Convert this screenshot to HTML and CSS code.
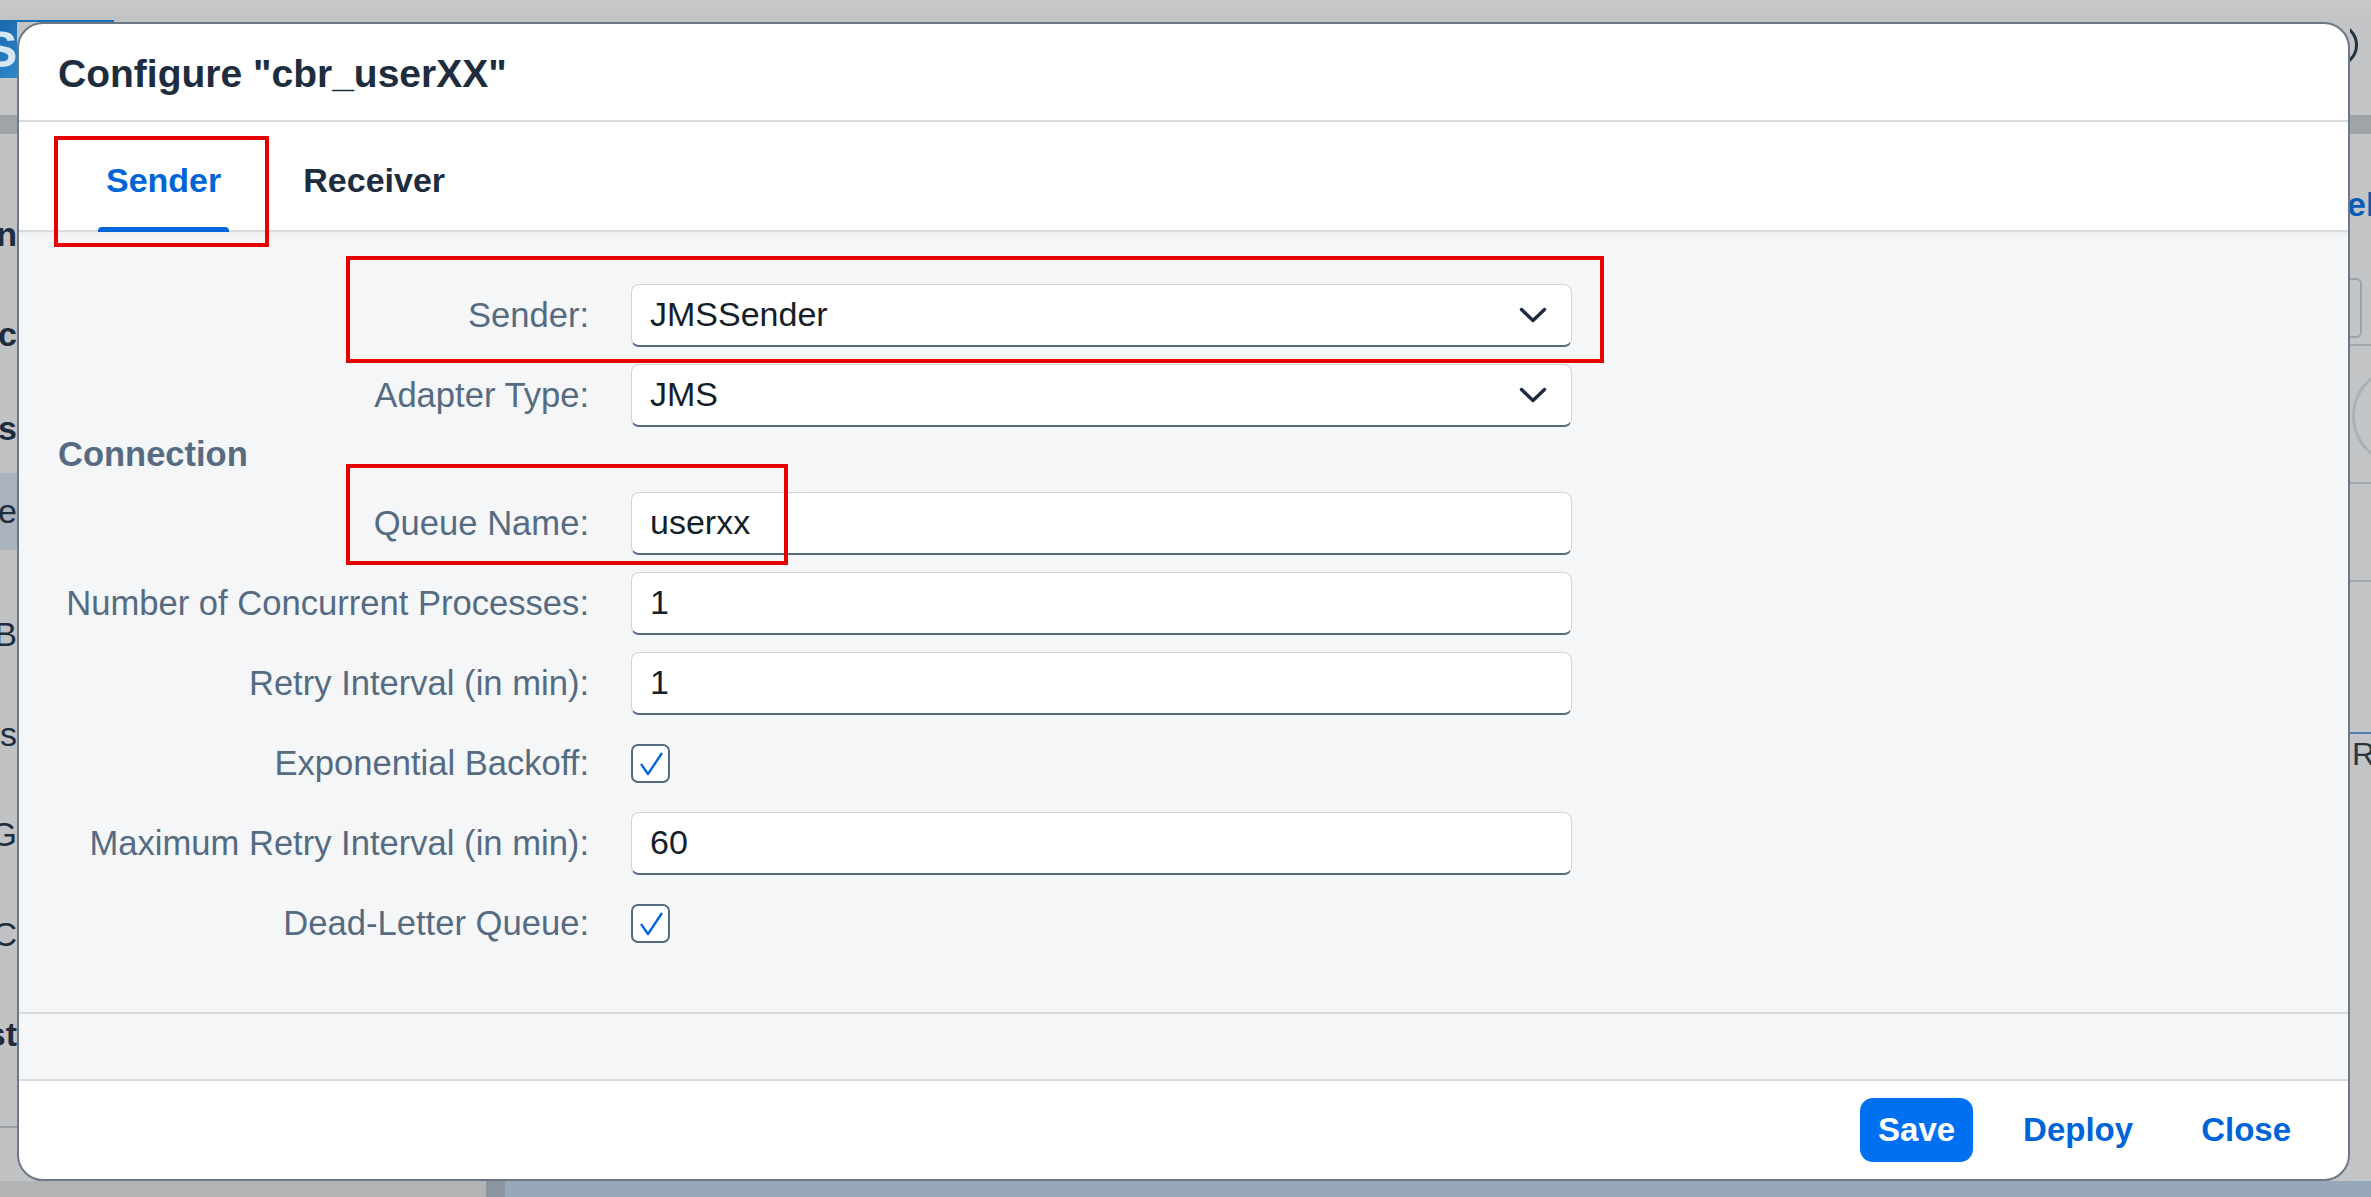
FILE: index.html
```html
<!DOCTYPE html>
<html lang="en">
<head>
<meta charset="utf-8">
<title>Configure cbr_userXX</title>
<link rel="stylesheet" href="styles.css">
</head>
<body>
<div class="page">
  <div class="page-top"><div class="top-logo"></div></div>
  <div class="page-mid">
    <aside class="left-strip">
      <div class="ls-logo"><span>S</span></div>
      <div class="ls-gray"></div>
      <div class="ls-band"></div>
      <div class="ls-space"></div>
      <div class="ls-item h100 bold">n</div>
      <div class="ls-item h100 bold">sc</div>
      <div class="ls-item h89 bold">s</div>
      <div class="ls-item h77 hl">e</div>
      <div class="ls-space34"></div>
      <div class="ls-item h100">B</div>
      <div class="ls-item h100">s</div>
      <div class="ls-item h100">G</div>
      <div class="ls-item h100">AC</div>
      <div class="ls-item h100 bold">st</div>
      <div class="ls-rest"></div>
    </aside>

    <section class="dialog">
      <header class="dlg-header">
        <h1 class="dlg-title">Configure &quot;cbr_userXX&quot;</h1>
      </header>
      <nav class="tabbar">
        <div class="tab active">Sender<span class="mark mark-tab"></span></div>
        <div class="tab">Receiver</div>
      </nav>
      <div class="content">
        <div class="row">
          <span class="mark mark-sender"></span>
          <div class="label">Sender:</div>
          <div class="input select"><span>JMSSender</span>
            <svg class="chev" width="28" height="16" viewBox="0 0 28 16"><polyline points="2.5,2.5 14,13.5 25.5,2.5" fill="none" stroke="#1d2d3e" stroke-width="3.4" stroke-linecap="round" stroke-linejoin="round"/></svg>
          </div>
        </div>
        <div class="row">
          <div class="label">Adapter Type:</div>
          <div class="input select"><span>JMS</span>
            <svg class="chev" width="28" height="16" viewBox="0 0 28 16"><polyline points="2.5,2.5 14,13.5 25.5,2.5" fill="none" stroke="#1d2d3e" stroke-width="3.4" stroke-linecap="round" stroke-linejoin="round"/></svg>
          </div>
        </div>
        <div class="group">Connection</div>
        <div class="row">
          <span class="mark mark-queue"></span>
          <div class="label">Queue Name:</div>
          <div class="input"><span>userxx</span></div>
        </div>
        <div class="row">
          <div class="label">Number of Concurrent Processes:</div>
          <div class="input"><span>1</span></div>
        </div>
        <div class="row">
          <div class="label">Retry Interval (in min):</div>
          <div class="input"><span>1</span></div>
        </div>
        <div class="row">
          <div class="label">Exponential Backoff:</div>
          <div class="checkbox">
            <svg width="35" height="35" viewBox="0 0 35 35"><polyline points="8,18 15,28 29,7" fill="none" stroke="#0064d9" stroke-width="2.3" stroke-linejoin="round"/></svg>
          </div>
        </div>
        <div class="row">
          <div class="label">Maximum Retry Interval (in min):</div>
          <div class="input"><span>60</span></div>
        </div>
        <div class="row">
          <div class="label">Dead-Letter Queue:</div>
          <div class="checkbox">
            <svg width="35" height="35" viewBox="0 0 35 35"><polyline points="8,18 15,28 29,7" fill="none" stroke="#0064d9" stroke-width="2.3" stroke-linejoin="round"/></svg>
          </div>
        </div>
      </div>
      <div class="strip"></div>
      <footer class="footer">
        <button class="btn primary">Save</button>
        <button class="btn">Deploy</button>
        <button class="btn">Close</button>
      </footer>
    </section>

    <aside class="right-strip">
      <div class="rs-top"><div class="avatar"></div></div>
      <div class="rs-band"></div>
      <div class="rs-el">el</div>
      <div class="rs-box"></div>
      <div class="rs-line"></div>
      <div class="rs-circle-wrap"><div class="rs-circle"></div></div>
      <div class="rs-line"></div>
      <div class="rs-space"></div>
      <div class="rs-line"></div>
      <div class="rs-space2"></div>
      <div class="rs-blue"></div>
      <div class="rs-r">R</div>
      <div class="rs-rest"></div>
    </aside>
  </div>
  <div class="page-bottom">
    <div class="pb-a"></div>
    <div class="pb-b"></div>
    <div class="pb-c"></div>
  </div>
</div>
</body>
</html>
```

FILE: styles.css
```css
* { box-sizing: border-box; }
html, body { margin: 0; padding: 0; }
body {
  width: 2371px;
  height: 1197px;
  overflow: hidden;
  background: #c2c3c5;
  font-family: "Liberation Sans", Arial, sans-serif;
}
.page { display: flex; flex-direction: column; width: 2371px; height: 1197px; }

/* backdrop */
.page-top { flex: none; height: 22px; background: linear-gradient(#c7c8ca, #c1c2c4); display: flex; align-items: flex-end; }
.top-logo { width: 114px; height: 2px; background: #1f6fb5; }
.page-mid { flex: none; height: 1159px; display: flex; }
.page-bottom { flex: 1; display: flex; }
.pb-a { width: 486px; background: #b2b3b5; }
.pb-b { width: 19px; background: #8b96a1; }
.pb-c { flex: 1; background: #97a9b8; }

.left-strip { flex: none; width: 17px; overflow: hidden; display: flex; flex-direction: column; background: #c1c2c4; }
.ls-logo { flex: none; height: 56px; background: linear-gradient(135deg, #1b69ad, #2b87c9); overflow: hidden; }
.ls-logo span { display: block; margin-left: -16px; font-size: 50px; font-weight: 700; line-height: 56px; color: #d7e6f3; }
.ls-gray { flex: none; height: 37px; background: #c5c6c8; }
.ls-band { flex: none; height: 19px; background: #a0a4a8; }
.ls-space { flex: none; height: 50px; }
.ls-space34 { flex: none; height: 34px; }
.ls-item { flex: none; display: flex; align-items: center; justify-content: flex-end; font-size: 34px; color: #1d2d3e; white-space: nowrap; }
.ls-item.bold { font-weight: 700; }
.ls-item.hl { background: #aab3bd; }
.h100 { height: 100px; }
.h89 { height: 89px; }
.h77 { height: 77px; }
.ls-rest { flex: 1; border-top: 42px solid #c1c2c4; box-shadow: inset 0 2px 0 #9a9ea2; }

.right-strip { flex: 1; overflow: hidden; display: flex; flex-direction: column; background: #c3c4c6; }
.rs-top { flex: none; height: 93px; padding-top: 1px; }
.avatar { width: 44px; height: 44px; margin-left: -36px; border-radius: 50%; border: 3px solid #22313f; }
.rs-band { flex: none; height: 19px; background: #a0a4a8; }
.rs-el { flex: none; height: 140px; padding-top: 50px; font-size: 34px; font-weight: 700; color: #0a5bb5; line-height: 40px; margin-left: -3px; }
.rs-box { flex: none; height: 60px; width: 12px; border: 2px solid #9aa2aa; border-left: none; border-radius: 0 6px 6px 0; margin-top: 4px; }
.rs-line { flex: none; height: 2px; background: #a3a8ad; margin-top: 6px; }
.rs-circle-wrap { flex: none; height: 130px; padding-top: 20px; }
.rs-circle { width: 100px; height: 100px; margin-left: 2px; border-radius: 50%; border: 3px solid #a9b0b7; }
.rs-space { flex: none; height: 90px; }
.rs-space2 { flex: none; height: 150px; }
.rs-blue { flex: none; height: 2px; background: #4d7fb0; }
.rs-r { flex: none; font-size: 32px; color: #2a3540; line-height: 40px; margin-left: 2px; }
.rs-rest { flex: 1; }

/* dialog */
.dialog {
  flex: none;
  width: 2333px;
  height: 1159px;
  border: 2px solid #6c7886;
  border-radius: 26px;
  background: #fff;
  overflow: hidden;
  display: flex;
  flex-direction: column;
}
.dlg-header { flex: none; height: 98px; padding: 28px 0 0 39px; border-bottom: 2px solid #d9dadc; }
.dlg-title { margin: 0; font-size: 39px; font-weight: 700; color: #1d2d3e; line-height: normal; }

.tabbar {
  flex: none;
  height: 110px;
  display: flex;
  gap: 66px;
  padding-left: 79px;
  border-bottom: 2px solid #d9dadc;
  box-shadow: 0 3px 6px rgba(0, 0, 0, 0.04);
  position: relative;
  z-index: 1;
  background: #fff;
}
.tab { position: relative; padding: 39px 8px 0; font-size: 34px; font-weight: 700; color: #1d2d3e; line-height: normal; }
.tab.active { color: #0064d9; }
.tab.active::after {
  content: "";
  position: absolute;
  left: 0;
  right: 0;
  bottom: -2px;
  height: 5px;
  background: #0064d9;
  border-radius: 4px 4px 0 0;
}

.content { flex: none; height: 782px; background: #f5f6f7; border-bottom: 2px solid #d9dadc; padding: 43px 0 0 39px; }
.row { display: flex; align-items: center; height: 80px; position: relative; }
.label { flex: none; width: 531px; margin-right: 42px; text-align: right; font-size: 34.6px; color: #556b82; white-space: nowrap; line-height: normal; }
.input {
  flex: none;
  width: 941px;
  height: 63px;
  background: #fff;
  border: 1px solid #cfd5db;
  border-bottom: 2px solid #556b82;
  border-radius: 8px;
  padding: 0 18px;
  display: flex;
  align-items: center;
  justify-content: space-between;
  font-size: 34px;
  color: #131e29;
}
.input.select { padding-right: 24px; }
.chev { display: block; flex: none; }
.group { height: 48px; font-size: 34.5px; font-weight: 700; color: #556b82; line-height: normal; }
.checkbox {
  flex: none;
  width: 39px;
  height: 39px;
  border: 2px solid #556b82;
  border-radius: 7px;
  background: #fff;
}
.checkbox svg { display: block; }

.mark { position: absolute; border: 4px solid #e60000; pointer-events: none; z-index: 3; }
.mark-tab { left: -44px; top: 14px; width: 215px; height: 111px; }
.mark-sender { left: 288px; top: -19px; width: 1258px; height: 107px; }
.mark-queue { left: 288px; top: -19px; width: 442px; height: 101px; }

.strip { flex: none; height: 67px; background: #f5f6f7; border-bottom: 2px solid #d9dadc; }
.footer { flex: 1; display: flex; justify-content: flex-end; align-items: center; gap: 32px; padding-right: 39px; }
.btn {
  height: 64px;
  padding: 0 18px;
  border: none;
  border-radius: 13px;
  background: transparent;
  font-family: "Liberation Sans", Arial, sans-serif;
  font-size: 33px;
  font-weight: 700;
  color: #0064d9;
}
.btn.primary { background: #0070f2; color: #fff; }
```
